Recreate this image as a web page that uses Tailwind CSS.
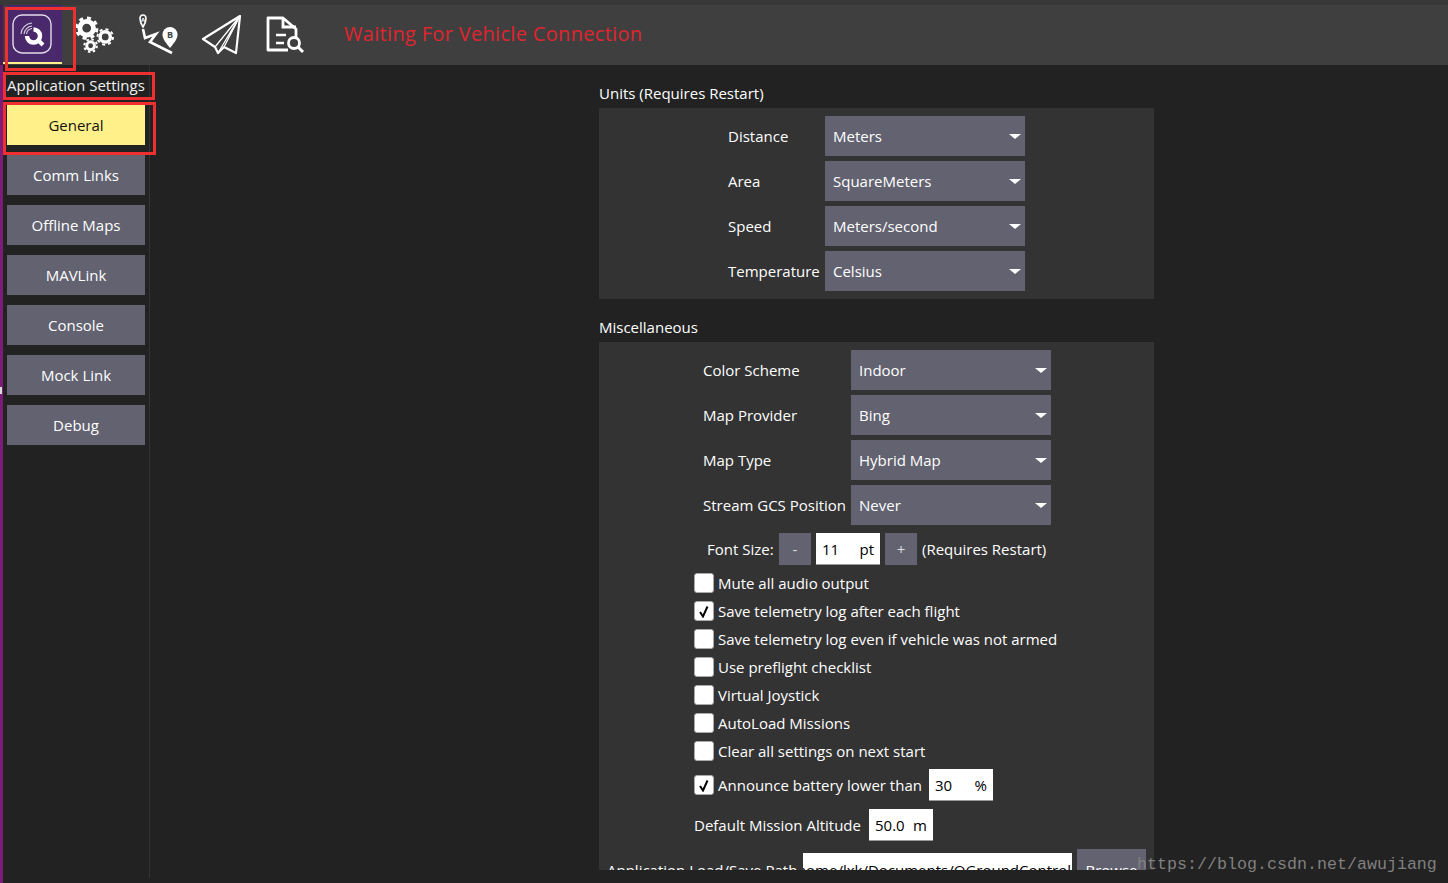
<!DOCTYPE html>
<html><head><meta charset="utf-8"><script src="https://cdn.jsdelivr.net/npm/@tailwindcss/browser@4"></script></head>
<body class="m-0">
<div class="relative w-[1448px] h-[883px] overflow-hidden bg-[#222222] text-white font-['Open_Sans',sans-serif] text-[15px] leading-5 flex flex-col">
  <!-- toolbar -->
  <header class="h-[65px] shrink-0 bg-[#3f3f3f] border-t-[5px] border-[#383838] flex items-stretch">
    <div class="w-[3px] bg-[#4a1a58]"></div>
    <div class="w-[59px] flex flex-col">
      <div class="flex-1 ml-[4px] bg-[#49296b] flex items-center justify-center">
        <svg width="40" height="40" viewBox="0 0 40 40" fill="none" class="ml-[-6px]">
          <rect x="1" y="1" width="38" height="38" rx="9" stroke="#e3dcea" stroke-width="1.400"/>
          <path d="M15 22 A6.500 6.500 0 1 0 21.500 15.500" stroke="#fff" stroke-width="4.400"/>
          <path d="M25 25l6 6" stroke="#fff" stroke-width="4"/>
          <path d="M9 20A12 12 0 0 1 20 9M12 20A9 9 0 0 1 20 12M14.500 20A6.500 6.500 0 0 1 20 14.500" stroke="#d9d2e2" stroke-width="1.100"/>
        </svg>
      </div>
      <div class="h-[2px] bg-[#fff08a] mb-px"></div>
    </div>
    <div class="flex items-start gap-[24px] pl-[13px] pt-[5px]">
      <svg width="39" height="46" viewBox="0 0 40 46" fill="none" class="mt-[1px]">
        <circle cx="12" cy="17" r="7" stroke="#fff" stroke-width="5"/>
        <circle cx="12" cy="17" r="10.500" stroke="#fff" stroke-width="3" stroke-dasharray="4.120 4.120"/>
        <circle cx="31" cy="26" r="5.250" stroke="#fff" stroke-width="3.500"/>
        <circle cx="31" cy="26" r="8" stroke="#fff" stroke-width="2" stroke-dasharray="3.140 3.140"/>
        <circle cx="16" cy="35" r="4" stroke="#fff" stroke-width="3"/>
        <circle cx="16" cy="35" r="6.500" stroke="#fff" stroke-width="2" stroke-dasharray="2.550 2.550"/>
      </svg>
      <svg width="40" height="46" viewBox="0 0 40 46" fill="none">
        <path d="M5 17 C1 11 1 5 5 5 C9 5 9 11 5 17Z" stroke="#fff" stroke-width="1.600"/>
        <text x="5" y="11.500" font-size="6" fill="#fff" text-anchor="middle" font-weight="700">A</text>
        <path d="M5 19 L7 28 L18 24 L12 32 L34 43" stroke="#fff" stroke-width="2.600"/>
        <path d="M32 38 C26 31 24.500 27.500 24.500 24.500 A7.500 7.500 0 0 1 39.500 24.500 C39.500 27.500 38 31 32 38Z" fill="#fff"/>
        <text x="32" y="28" font-size="9" fill="#444" text-anchor="middle" font-weight="700">B</text>
      </svg>
      <svg width="40" height="40" viewBox="0 0 40 40" fill="none" class="mt-[5px] ml-[-1px]">
        <path d="M39 1 L2 24 L14 32 L17 38 L23 32 L35 38 Z" stroke="#fff" stroke-width="2.200" stroke-linejoin="round"/>
        <path d="M39 1 L14 32 M39 1 L17 38 M39 1 L23 32" stroke="#fff" stroke-width="1.300"/>
      </svg>
      <svg width="40" height="40" viewBox="0 0 40 40" fill="none" class="mt-[6px]">
        <path d="M23 34 H3 V2 H18 L31 13 V22" stroke="#fff" stroke-width="2.800" stroke-linejoin="round"/>
        <path d="M18 2 V11 H31" stroke="#fff" stroke-width="2.800"/>
        <path d="M11 19 H21 M11 27 H19" stroke="#fff" stroke-width="2.400"/>
        <circle cx="29" cy="27" r="5.500" stroke="#fff" stroke-width="2.800"/>
        <path d="M33 31 L38 36" stroke="#fff" stroke-width="3"/>
      </svg>
    </div>
    <div class="ml-[39px] mt-[4px] h-[50px] flex items-center text-[20px] text-[#e0252f] tracking-[0.32px] whitespace-nowrap">Waiting For Vehicle Connection</div>
  </header>

  <div class="flex-1 flex min-h-0">
    <div class="relative w-[3px] bg-[#7b1c78] shrink-0"><div class="absolute left-0 top-[322px] w-[2px] h-[7px] bg-[#ddd]"></div></div>
    <!-- sidebar -->
    <aside class="w-[147px] h-[813px] shrink-0 border-r border-[#333333] flex flex-col pl-[4px]">
      <div class="h-[40px] flex items-center text-[#f2f2f2] whitespace-nowrap">Application Settings</div>
      <div class="flex flex-col gap-[10px] w-[138px]">
        <div class="h-[40px] flex items-center justify-center bg-[#fff08a] text-[#111]">General</div>
        <div class="h-[40px] flex items-center justify-center bg-[#626270]">Comm Links</div>
        <div class="h-[40px] flex items-center justify-center bg-[#626270]">Offline Maps</div>
        <div class="h-[40px] flex items-center justify-center bg-[#626270]">MAVLink</div>
        <div class="h-[40px] flex items-center justify-center bg-[#626270]">Console</div>
        <div class="h-[40px] flex items-center justify-center bg-[#626270]">Mock Link</div>
        <div class="h-[40px] flex items-center justify-center bg-[#626270]">Debug</div>
      </div>
    </aside>
    <!-- content -->
    <main class="flex-1 min-w-0 h-[805px] overflow-hidden pl-[449px] pt-[18px]">
      <div class="w-[555px]">
        <div class="h-[20px] leading-5 whitespace-nowrap">Units (Requires Restart)</div>
        <section class="mt-[5px] h-[191px] bg-[#333333] pt-[8px] pl-[129px] flex flex-col gap-[5px]">
          <div class="flex items-center h-[40px]"><span class="w-[97px]">Distance</span><div class="w-[200px] h-[40px] bg-[#626270] flex items-center justify-between pl-[8px] pr-[4px]">Meters<i class="w-0 h-0 border-x-[6px] border-x-transparent border-t-[5px] border-t-white"></i></div></div>
          <div class="flex items-center h-[40px]"><span class="w-[97px]">Area</span><div class="w-[200px] h-[40px] bg-[#626270] flex items-center justify-between pl-[8px] pr-[4px]">SquareMeters<i class="w-0 h-0 border-x-[6px] border-x-transparent border-t-[5px] border-t-white"></i></div></div>
          <div class="flex items-center h-[40px]"><span class="w-[97px]">Speed</span><div class="w-[200px] h-[40px] bg-[#626270] flex items-center justify-between pl-[8px] pr-[4px]">Meters/second<i class="w-0 h-0 border-x-[6px] border-x-transparent border-t-[5px] border-t-white"></i></div></div>
          <div class="flex items-center h-[40px]"><span class="w-[97px]">Temperature</span><div class="w-[200px] h-[40px] bg-[#626270] flex items-center justify-between pl-[8px] pr-[4px]">Celsius<i class="w-0 h-0 border-x-[6px] border-x-transparent border-t-[5px] border-t-white"></i></div></div>
        </section>
        <div class="mt-[18px] h-[20px] leading-5">Miscellaneous</div>
        <section class="mt-[5px] h-[540px] bg-[#333333] pt-[8px] flex flex-col">
          <div class="pl-[104px] flex flex-col gap-[5px]">
            <div class="flex items-center h-[40px]"><span class="w-[148px] whitespace-nowrap">Color Scheme</span><div class="w-[200px] h-[40px] bg-[#626270] flex items-center justify-between pl-[8px] pr-[4px]">Indoor<i class="w-0 h-0 border-x-[6px] border-x-transparent border-t-[5px] border-t-white"></i></div></div>
            <div class="flex items-center h-[40px]"><span class="w-[148px] whitespace-nowrap">Map Provider</span><div class="w-[200px] h-[40px] bg-[#626270] flex items-center justify-between pl-[8px] pr-[4px]">Bing<i class="w-0 h-0 border-x-[6px] border-x-transparent border-t-[5px] border-t-white"></i></div></div>
            <div class="flex items-center h-[40px]"><span class="w-[148px] whitespace-nowrap">Map Type</span><div class="w-[200px] h-[40px] bg-[#626270] flex items-center justify-between pl-[8px] pr-[4px]">Hybrid Map<i class="w-0 h-0 border-x-[6px] border-x-transparent border-t-[5px] border-t-white"></i></div></div>
            <div class="flex items-center h-[40px]"><span class="w-[148px] whitespace-nowrap">Stream GCS Position</span><div class="w-[200px] h-[40px] bg-[#626270] flex items-center justify-between pl-[8px] pr-[4px]">Never<i class="w-0 h-0 border-x-[6px] border-x-transparent border-t-[5px] border-t-white"></i></div></div>
          </div>
          <div class="mt-[8px] pl-[108px] flex items-center h-[32px] gap-[5px] whitespace-nowrap">
            <span class="w-[67px]">Font Size:</span>
            <div class="w-[32px] h-[32px] bg-[#626270] flex items-center justify-center text-[#ddd]">-</div>
            <div class="w-[64px] h-[32px] bg-white border-b border-[#999] text-black flex items-center justify-between px-[6px]"><span>11</span><span>pt</span></div>
            <div class="w-[32px] h-[32px] bg-[#626270] flex items-center justify-center text-[#ddd]">+</div>
            <span>(Requires Restart)</span>
          </div>
          <div class="mt-[8px] pl-[95px] flex flex-col gap-[8px] whitespace-nowrap">
            <div class="flex items-center h-[20px] gap-[4px]"><div class="w-[20px] h-[20px] rounded-[3px] bg-white border border-[#aaa]"></div>Mute all audio output</div>
            <div class="flex items-center h-[20px] gap-[4px]"><div class="w-[20px] h-[20px] rounded-[3px] bg-white border border-[#aaa] flex items-center justify-center text-black"><svg width="12" height="13" viewBox="0 0 12 13" fill="none"><path d="M2 7l3 4.500 4.500-10" stroke="#000" stroke-width="2"/></svg></div>Save telemetry log after each flight</div>
            <div class="flex items-center h-[20px] gap-[4px]"><div class="w-[20px] h-[20px] rounded-[3px] bg-white border border-[#aaa]"></div>Save telemetry log even if vehicle was not armed</div>
            <div class="flex items-center h-[20px] gap-[4px]"><div class="w-[20px] h-[20px] rounded-[3px] bg-white border border-[#aaa]"></div>Use preflight checklist</div>
            <div class="flex items-center h-[20px] gap-[4px]"><div class="w-[20px] h-[20px] rounded-[3px] bg-white border border-[#aaa]"></div>Virtual Joystick</div>
            <div class="flex items-center h-[20px] gap-[4px]"><div class="w-[20px] h-[20px] rounded-[3px] bg-white border border-[#aaa]"></div>AutoLoad Missions</div>
            <div class="flex items-center h-[20px] gap-[4px]"><div class="w-[20px] h-[20px] rounded-[3px] bg-white border border-[#aaa]"></div>Clear all settings on next start</div>
          </div>
          <div class="mt-[8px] pl-[95px] h-[32px] flex items-center whitespace-nowrap">
            <div class="w-[20px] h-[20px] rounded-[3px] bg-white border border-[#aaa] flex items-center justify-center"><svg width="12" height="13" viewBox="0 0 12 13" fill="none"><path d="M2 7l3 4.500 4.500-10" stroke="#000" stroke-width="2"/></svg></div>
            <span class="ml-[4px] w-[211px]">Announce battery lower than</span>
            <div class="w-[64px] h-[32px] bg-white border-b border-[#999] text-black flex items-center justify-between px-[6px]"><span>30</span><span>%</span></div>
          </div>
          <div class="mt-[8px] pl-[95px] h-[32px] flex items-center whitespace-nowrap">
            <span class="w-[175px]">Default Mission Altitude</span>
            <div class="w-[64px] h-[32px] bg-white border-b border-[#999] text-black flex items-center justify-between px-[6px]"><span>50.0</span><span>m</span></div>
          </div>
          <div class="mt-[8px] pl-[8px] flex whitespace-nowrap">
            <span class="w-[196px] pt-[11px]">Application Load/Save Path</span>
            <div class="mt-[4px] w-[269px] h-[32px] bg-white text-black overflow-hidden pt-[7px] flex justify-end pr-[1px]">/home/lxk/Documents/QGroundControl</div>
            <div class="ml-[5px] w-[69px] h-[40px] bg-[#626270] pt-[11px] text-center">Browse</div>
          </div>
        </section>
      </div>
    </main>
  </div>

  <!-- annotation frames -->
  <div class="absolute left-[5px] top-[7px] w-[71px] h-[64px] border-[3px] border-[#f03030]"></div>
  <div class="absolute left-[3px] top-[72px] w-[152px] h-[28px] border-[3px] border-[#f03030]"></div>
  <div class="absolute left-[3px] top-[102px] w-[153px] h-[53px] border-[3px] border-[#f03030]"></div>
  <!-- watermark -->
  <div class="absolute left-[1137px] top-[855px] font-['Liberation_Mono',monospace] text-[16.67px] leading-5 text-[#808080] whitespace-nowrap">https://blog.csdn.net/awujiang</div>
</div>
</body></html>
